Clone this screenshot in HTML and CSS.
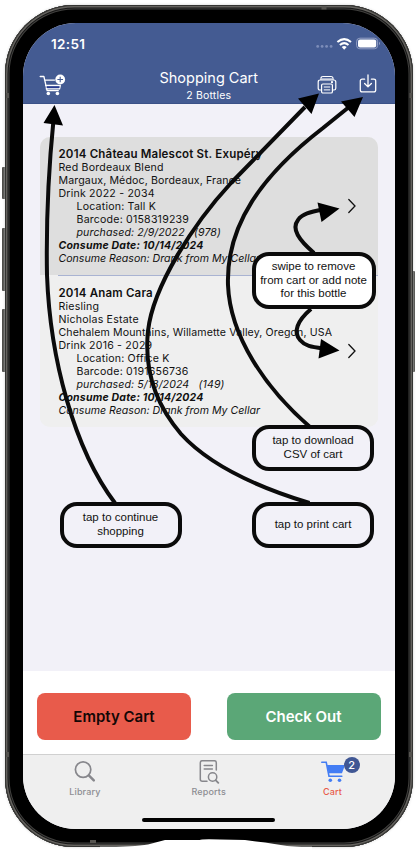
FILE: index.html
```html
<!DOCTYPE html>
<html lang="en">
<head>
<meta charset="utf-8">
<title>Shopping Cart</title>
<link rel="stylesheet" href="styles.css">
</head>
<body>
<div class="stage">
  <i class="key mute"></i><i class="key vol-up"></i><i class="key vol-down"></i><i class="key power"></i>
  <div class="phone">
    <main class="screen">
      <header class="top">
        <div class="status">
          <span class="time">12:51</span>
          <svg class="signals" width="66" height="14" viewBox="0 0 66 14">
            <g fill="#7d8db9"><circle cx="2.7" cy="9.4" r="1.4"/><circle cx="7.1" cy="9.4" r="1.4"/><circle cx="11.6" cy="9.4" r="1.4"/><circle cx="16.1" cy="9.4" r="1.4"/></g>
            <g fill="none" stroke="#fff" stroke-width="2"><path d="M22.4 5.1q6.8-6 13.6 0M24.9 8q4.3-3.8 8.6 0"/></g>
            <path fill="#fff" d="M26.7 10q2.5-2 5 0l-2.5 2.8z"/>
            <rect x="41.6" y="1.2" width="21" height="10.6" rx="3.3" fill="none" stroke="#94a0c5"/>
            <rect x="43" y="2.6" width="18.200" height="7.800" rx="2" fill="#fff"/>
            <path d="M64 4.8q2 1.7 0 3.4z" fill="#94a0c5"/>
          </svg>
        </div>
        <div class="nav">
          <svg width="27" height="23" viewBox="0 0 27 23">
            <g fill="none" stroke="#fff" stroke-width="1.3" stroke-linecap="round" stroke-linejoin="round"><path d="M1.200 2.500h3.700l3.200 14.200h11.200M5.500 6.100h10M6.600 11.500h13.800M7.200 14.800h13.400l.7-3.300"/></g>
            <path d="M7.500 13.100h13" stroke="#1d2f91" stroke-width="1.300"/>
            <circle cx="9.300" cy="19.500" r="1.800" fill="#fff"/><circle cx="18.400" cy="19.500" r="1.800" fill="#fff"/>
            <circle cx="21.2" cy="5.500" r="4.900" fill="#fff"/><path d="M18.400 5.500H24M21.200 2.700v5.600" stroke="#445b92" stroke-width="1.100"/>
          </svg>
          <div class="heading"><h1>Shopping Cart</h1><p>2 Bottles</p></div>
          <div class="actions">
            <svg width="20" height="20" viewBox="0 0 20 20" fill="none" stroke="#fff" stroke-width="1.2" stroke-linejoin="round">
              <path d="M4 5V3.5Q4 1.5 6 1.5h8Q16 1.5 16 3.5V5M4.2 15H3Q1.2 15 1.2 13.2V7Q1.2 5 3.2 5h13.6q2 0 2 2v6.2q0 1.8-1.8 1.8h-1.2"/>
              <rect x="4.6" y="9" width="10.8" height="9" rx="1.3"/><path d="M6.8 12h6.4M6.8 14.9h6.4M5 4h10" stroke-width="1"/><circle cx="15" cy="7.2" r=".5"/>
            </svg>
            <svg width="18" height="20" viewBox="0 0 18 20" fill="none" stroke="#fff" stroke-width="1.3" stroke-linecap="round" stroke-linejoin="round">
              <path d="M5.6 5.2H3.2Q1.3 5.2 1.3 7v9q0 1.9 1.9 1.9h11.6q1.9 0 1.9-1.9V7q0-1.8-1.9-1.8h-2.4M9 1v11.5M5.6 9.5L9 12.9l3.4-3.4"/>
            </svg>
          </div>
        </div>
      </header>
      <section class="content">
        <div class="list">
          <article class="item selected">
            <div class="details">
              <h2>2014 Château Malescot St. Exupéry</h2>
              <p>Red Bordeaux Blend</p>
              <p class="region">Margaux, Médoc, Bordeaux, France</p>
              <p>Drink 2022 - 2034</p>
              <p class="indent">Location: Tall K</p>
              <p class="indent">Barcode: 0158319239</p>
              <p class="indent slant bought">purchased: 2/9/2022 &nbsp; (978)</p>
              <p class="slant consume">Consume Date: 10/14/2024</p>
              <p class="slant reason">Consume Reason: Drank from My Cellar</p>
            </div>
            <svg class="chevron" width="10" height="16" viewBox="0 0 10 16"><path d="M1.8 1.5L8 8l-6.2 6.5"/></svg>
          </article>
          <article class="item">
            <div class="details">
              <h2>2014 Anam Cara</h2>
              <p>Riesling</p>
              <p>Nicholas Estate</p>
              <p class="region">Chehalem Mountains, Willamette Valley, Oregon, USA</p>
              <p>Drink 2016 - 2029</p>
              <p class="indent">Location: Office K</p>
              <p class="indent">Barcode: 0191656736</p>
              <p class="indent slant bought">purchased: 5/18/2024 &nbsp; (149)</p>
              <p class="slant consume">Consume Date: 10/14/2024</p>
              <p class="slant reason">Consume Reason: Drank from My Cellar</p>
            </div>
            <svg class="chevron" width="10" height="16" viewBox="0 0 10 16"><path d="M1.8 1.5L8 8l-6.2 6.5"/></svg>
          </article>
        </div>
      </section>
      <div class="buttons"><button class="empty">Empty Cart</button><button class="checkout">Check Out</button></div>
      <nav class="tabs">
        <div class="tab">
          <svg width="24" height="24" viewBox="0 0 24 24" fill="none" stroke="#87878c"><circle cx="10.1" cy="9.600" r="7.700" stroke-width="1.700"/><path d="M15.800 15.400l5 5" stroke-width="2.500" stroke-linecap="round"/></svg>
          <span>Library</span>
        </div>
        <div class="tab">
          <svg width="24" height="24" viewBox="0 0 24 24" fill="none" stroke="#87878c" stroke-width="1.500" stroke-linecap="round"><path d="M10 21.200H5.300q-2 0-2-2V2.700q0-2 2-2h12q2 0 2 2v7.200M7.200 5.400h8.200M7.200 9.100h8.200"/><circle cx="15.600" cy="17" r="4.200"/><path d="M18.800 20.300l2.500 2.600" stroke-width="1.800"/></svg>
          <span>Reports</span>
        </div>
        <div class="tab active">
          <svg width="24" height="24" viewBox="0 0 24 24"><path d="M6 5h18l-3 8.300H7.700z" fill="#437df4"/><path d="M.8 2.200h4.400L8 16.200h12.800" fill="none" stroke="#437df4" stroke-width="1.600" stroke-linecap="round"/><circle cx="9.300" cy="20.300" r="1.800" fill="#437df4"/><circle cx="18.500" cy="20.300" r="1.800" fill="#437df4"/></svg>
          <span>Cart</span><b class="badge">2</b>
        </div>
      </nav>
      <div class="home"><i></i></div>
    </main>
  </div>
  <svg class="edge" width="417" height="850" viewBox="0 0 417 850">
    <g fill="#55534f"><path d="M6 93h3v5H6zM409.500 93h2.500v5h-2.500zM6 752h3v5H6zM409 752h3v5h-3zM321.500 6.500h5v3h-5zM90 840h6v3h-6z"/></g>
    <path fill="#fff" d="M100 850v-3.200q35 0 48-2.300l17-4.500h35q0-1 20-.5l25 .5 20 2.500 22 3.500q10 1 25 .8v3.200z"/>
  </svg>
  <svg class="arrows" width="417" height="850" viewBox="0 0 417 850">
    <g fill="none" stroke="#0b0b0b" stroke-width="4">
      <path d="M115 503C74 449 50 358 47 275C46 220 49 165 53.500 120"/>
      <path d="M309.500 503C260 488 211 467 181 434C156 405 144 370 148 331C153 286 194 223 231 183L305 107"/>
      <path d="M310 427C265 388 230 336 228 285C226 225 262 175 323 128L349 107"/>
      <path d="M314 253C299 240 291 229 298 220C302 214 310 212 323 209.500"/>
      <path d="M311 309C297 321 293 332 300 340C305 346 311 347 323 348.500"/>
    </g>
    <g fill="#000"><path d="M54.500 105L63 125.500 43.500 123zM319 93.500L311.500 114 298 98.500zM363 97L354.500 117 341 101.500zM339.500 208.500L317.500 202.500 321.500 222zM339.500 350.500L321 339 318.500 358.500z"/></g>
  </svg>
  <div class="note swipe">swipe to remove<br>from cart or add note<br>for this bottle</div>
  <div class="note download">tap to download<br>CSV of cart</div>
  <div class="note print">tap to print cart</div>
  <div class="note continue">tap to continue<br>shopping</div>
</div>
</body>
</html>
```
FILE: styles.css
```css
* { box-sizing: border-box; }
body, h1, h2, p { margin: 0; }
body { background: #fff; overflow: hidden; font-family: Inter, sans-serif; color: #111; }
svg { display: block; flex: none; }
.stage { position: relative; width: 417px; height: 850px; padding: 5px 0 0 5px; }
.phone { position: relative; width: 407.500px; height: 841.500px; padding: 17.500px 18px; border-radius: 69px; background: #000; box-shadow: inset 0 0 0 1px #343432, inset 0 0 0 2.500px #65635f, inset 0 0 0 3.500px #171717, inset 0 0 0 4.500px #41403e, 0 0 3px #ccc; }
.key { position: absolute; width: 4px; background: #4a4946; border-radius: 1px; }
.mute { left: 2px; top: 167px; height: 32px; }
.vol-up { left: 2px; top: 228px; height: 63px; }
.vol-down { left: 2px; top: 309px; height: 63px; }
.power { left: 411px; top: 271px; height: 101px; }
.screen { display: flex; flex-direction: column; width: 371.500px; height: 806px; border-radius: 53px; overflow: hidden; background: #f2f1f8; }
.top { height: 81.500px; background: #445b92; color: #fff; border-bottom: 1px solid #3b5187; }
.status { display: flex; justify-content: space-between; padding: 13.500px 14px 0 28px; height: 46px; }
.time { font-size: 13.500px; font-weight: 600; line-height: 16px; letter-spacing: .35px; }
.signals { margin-top: 1px; }
.nav { display: grid; grid-template-columns: 80px 1fr 80px; padding: 0 16px; height: 35px; }
.nav > svg { margin-top: 5px; }
.heading { text-align: center; }
.heading h1 { font-size: 14.500px; line-height: 18px; font-weight: 400; }
.heading p { font-size: 10.500px; line-height: 16px; letter-spacing: .2px; margin-top: 1px; }
.actions { display: flex; justify-content: flex-end; gap: 22px; padding: 6px 2px 0 0; }
.actions svg + svg { margin-top: -1px; }
.content { height: 567px; padding: 32.500px 17px 0 17px; }
.list { border-radius: 10px; overflow: hidden; background: #efefef; }
.item { display: flex; justify-content: space-between; align-items: center; height: 152px; padding: 0 21px 0 18.500px; background: #efefef; }
.item.selected { height: 138.500px; background: #dedede; }
.details { align-self: flex-start; padding-top: 10px; white-space: nowrap; font-size: 10.600px; line-height: 13.100px; letter-spacing: .2px; width: 270px; }
.details h2 { font-size: 11.500px; line-height: 14px; font-weight: 600; letter-spacing: .2px; }
.region { letter-spacing: .12px; }
.item + .item .details { padding-top: 10.500px; }
.indent { padding-left: 18px; }
.slant { font-style: italic; }
.bought { letter-spacing: .1px; }
.reason { letter-spacing: 0; }
.consume { font-size: 10.500px; font-weight: 700; }
.item + .item { position: relative; }
.item + .item::before { content: ""; position: absolute; left: 18px; right: 0; top: 0; height: 1px; background: #a9b3d2; }
.chevron { fill: none; stroke: #111; stroke-width: 1.300; stroke-linecap: round; }
.buttons { display: flex; justify-content: space-between; height: 83px; padding: 22px 14px 14px; background: #fff; }
.buttons button { width: 154px; height: 47px; padding: 0; border: 0; border-radius: 8px; font: 600 15px Inter, sans-serif; }
.empty { background: #e85b4b; color: #130706; }
.checkout { background: #5ba777; color: #fff; }
.tabs { display: grid; grid-template-columns: repeat(3, 1fr); height: 58px; background: #efefef; border-top: 1px solid #d0d0d0; color: #8d8d92; }
.tab { position: relative; display: flex; flex-direction: column; align-items: center; padding-top: 5px; font-size: 9px; font-weight: 500; line-height: 12px; letter-spacing: .15px; }
.tab span { margin-top: 2px; }
.tab.active { color: #e85b4b; }
.badge { position: absolute; left: 73px; top: 2px; width: 16px; height: 16px; border-radius: 50%; background: #405794; color: #fff; font-size: 11px; line-height: 16px; font-weight: 500; text-align: center; letter-spacing: 0; }
.home { flex: 1; display: flex; justify-content: center; padding-top: 5.500px; background: #efefef; }
.home i { width: 133px; height: 4px; border-radius: 2px; background: #000; }
.edge, .arrows { position: absolute; left: 0; top: 0; pointer-events: none; }
.note { position: absolute; display: flex; align-items: center; justify-content: center; text-align: center; border: 4px solid #0b0b0b; border-radius: 17px; background: #f2f1f8; font: 11.500px/13.500px "Liberation Sans", sans-serif; white-space: nowrap; }
.swipe { left: 251.500px; top: 252px; width: 124px; height: 56.500px; background: #fff; }
.download { left: 252px; top: 424.500px; width: 122px; height: 46.500px; }
.print { left: 252px; top: 501.500px; width: 122px; height: 46.500px; }
.continue { left: 59.500px; top: 501.500px; width: 122px; height: 46.500px; }
```
